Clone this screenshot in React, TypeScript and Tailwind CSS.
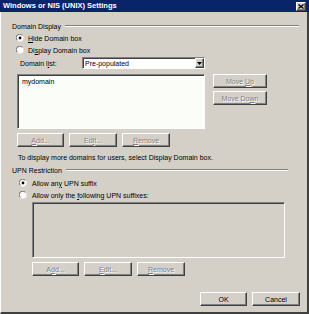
import type { ReactNode } from 'react';

const raised =
  'border border-t-white border-l-white border-r-[#404040] border-b-[#404040] shadow-[inset_-1px_-1px_0_#808080] bg-[#d4d0c8]';
const sunken =
  'border border-t-[#808080] border-l-[#808080] border-r-white border-b-white shadow-[inset_1px_1px_0_#404040]';
const grayText = 'text-[#808080] [text-shadow:1px_1px_0_#fff]';

// label with one underlined mnemonic letter
function Mn({ text, at }: { text: string; at: number }) {
  return (
    <>
      {text.slice(0, at)}
      <span className="underline underline-offset-[1px]">{text[at]}</span>
      {text.slice(at + 1)}
    </>
  );
}

function Btn({ children, w, disabled }: { children: ReactNode; w: string; disabled?: boolean }) {
  return (
    <div className={`${raised} ${w} h-[14px] flex items-center justify-center leading-none ${disabled ? grayText : 'text-black'}`}>
      <span>{children}</span>
    </div>
  );
}

function Radio({ checked }: { checked?: boolean }) {
  return (
    <svg width="8" height="8" viewBox="0 0 8 8" className="shrink-0">
      <circle cx="4" cy="4" r="3.6" fill="#fff" stroke="#e8e6e0" strokeWidth="0.8" />
      <path d="M1.2 6.3 A3.4 3.4 0 0 1 6.3 1.2" stroke="#6a6a6a" strokeWidth="1" fill="none" />
      {checked && <circle cx="4" cy="4" r="1.4" fill="#000" />}
    </svg>
  );
}

function Group({ title, end }: { title: string; end: string }) {
  return (
    <div className="flex items-center h-[8px] pl-[11px]">
      <span className="leading-none">{title}</span>
      <div className={`ml-[4px] h-[2px] border-t border-t-[#808080] border-b border-b-white ${end}`} />
    </div>
  );
}

export default function App() {
  return (
    <div
      className="w-[309px] h-[314px] bg-[#d4d0c8] flex flex-col text-[7px] text-black overflow-hidden"
      style={{ fontFamily: '"Liberation Sans", Arial, sans-serif' }}
    >
      {/* title bar */}
      <div className="h-[12px] bg-[#0a246a] flex items-center px-[3px] shrink-0">
        <span className="text-white font-bold text-[7.5px] leading-none">Windows or NIS (UNIX) Settings</span>
        <div className={`${raised} ml-auto w-[10px] h-[9px] flex items-center justify-center`}>
          <svg width="6" height="5" viewBox="0 0 6 5">
            <path d="M0.5 0.5 L5.5 4.5 M5.5 0.5 L0.5 4.5" stroke="#000" strokeWidth="1.3" />
          </svg>
        </div>
      </div>

      {/* body */}
      <div className="flex-1 flex flex-col border-l border-l-white border-r-2 border-r-[#404040] border-b-2 border-b-[#404040]">
        <div className="mt-[10px]">
          <Group title="Domain Display" end="w-[234px]" />
        </div>

        <div className="mt-[4px] h-[8px] flex items-center pl-[15px] gap-[4px]">
          <Radio checked />
          <span className="leading-none"><Mn text="Hide Domain box" at={0} /></span>
        </div>
        <div className="mt-[4px] h-[8px] flex items-center pl-[15px] gap-[4px]">
          <Radio />
          <span className="leading-none"><Mn text="Display Domain box" at={2} /></span>
        </div>

        <div className="mt-[3px] h-[12px] flex items-center pl-[19px]">
          <span className="w-[62px] leading-none"><Mn text="Domain list:" at={8} /></span>
          <div className={`${sunken} bg-white w-[123px] h-[12px] flex items-center`}>
            <span className="pl-[2px] leading-none flex-1">Pre-populated</span>
            <div className={`${raised} w-[9px] h-[10px] flex items-center justify-center`}>
              <svg width="5" height="3" viewBox="0 0 5 3">
                <path d="M0 0 H5 L2.5 3 Z" fill="#000" />
              </svg>
            </div>
          </div>
        </div>

        <div className="mt-[5px] flex pl-[16px]">
          <div className={`${sunken} bg-[#fafdf8] w-[188px] h-[55px] px-[4px] pt-[3px] leading-none`}>mydomain</div>
          <div className="ml-[8px] flex flex-col gap-[3px]">
            <Btn w="w-[54px]" disabled><Mn text="Move Up" at={5} /></Btn>
            <Btn w="w-[54px]" disabled><Mn text="Move Down" at={7} /></Btn>
          </div>
        </div>

        <div className="mt-[4px] flex gap-[5px] pl-[16px]">
          <Btn w="w-[47px]" disabled><Mn text="Add..." at={0} /></Btn>
          <Btn w="w-[48px]" disabled><Mn text="Edit..." at={2} /></Btn>
          <Btn w="w-[48px]" disabled><Mn text="Remove" at={0} /></Btn>
        </div>

        <div className="mt-[6px] h-[8px] flex items-center pl-[17px] leading-none">
          To display more domains for users, select Display Domain box.
        </div>

        <div className="mt-[5px]">
          <Group title="UPN Restriction" end="w-[222px]" />
        </div>

        <div className="mt-[5px] h-[8px] flex items-center pl-[18px] gap-[5px]">
          <Radio checked />
          <span className="leading-none"><Mn text="Allow any UPN suffix" at={8} /></span>
        </div>
        <div className="mt-[4px] h-[8px] flex items-center pl-[18px] gap-[5px]">
          <Radio />
          <span className="leading-none"><Mn text="Allow only the following UPN suffixes:" at={15} /></span>
        </div>

        <div className="mt-[3px] pl-[31px]">
          <div className={`${sunken} bg-[#d4d0c8] w-[253px] h-[56px]`} />
        </div>

        <div className="mt-[4px] flex gap-[5px] pl-[31px]">
          <Btn w="w-[47px]" disabled><Mn text="Add..." at={1} /></Btn>
          <Btn w="w-[48px]" disabled><Mn text="Edit..." at={0} /></Btn>
          <Btn w="w-[48px]" disabled><Mn text="Remove" at={0} /></Btn>
        </div>

        <div className="mt-[16px] flex justify-end gap-[5px] pr-[7px]">
          <Btn w="w-[47px]">OK</Btn>
          <Btn w="w-[48px]">Cancel</Btn>
        </div>
      </div>
    </div>
  );
}
